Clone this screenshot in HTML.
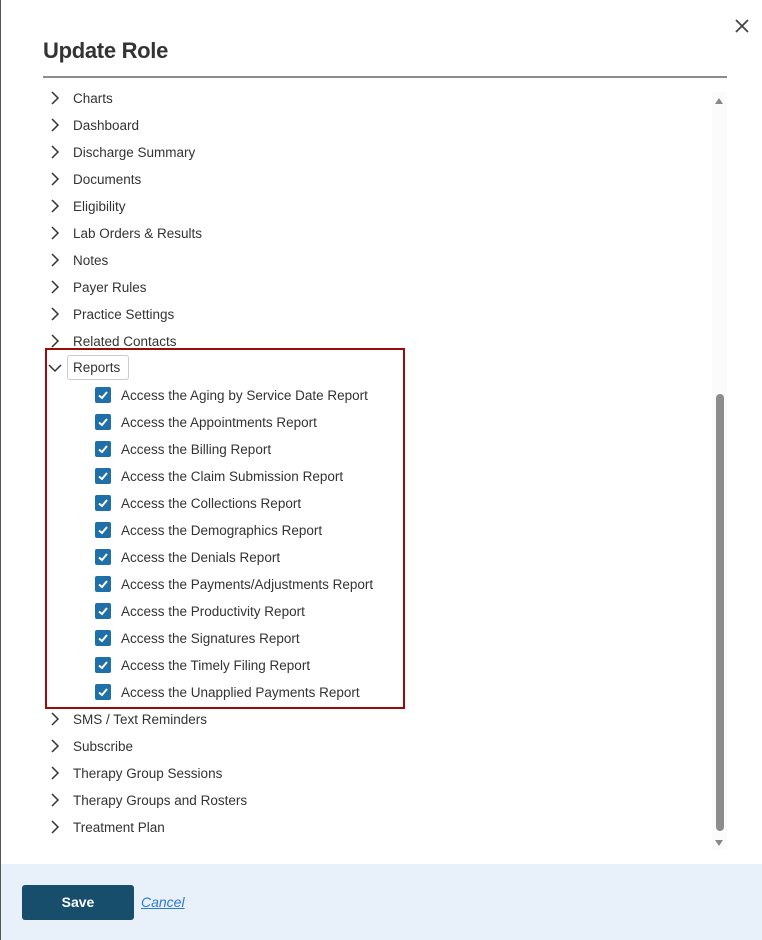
<!DOCTYPE html>
<html><head><style>
*{margin:0;padding:0;box-sizing:border-box}
body{width:762px;height:940px;background:#fff;font-family:"Liberation Sans",sans-serif;position:relative;overflow:hidden;color:#333}
.lb{position:absolute;left:0;top:0;width:1px;height:940px;background:#555}
h1{position:absolute;left:43px;top:38px;font-size:22px;font-weight:bold;color:#333;letter-spacing:-0.3px}
.sep{position:absolute;left:43px;top:76px;width:684px;height:2px;background:#8c8c8c}
.row{position:absolute;left:73px;font-size:13.5px;color:#333;height:27px;line-height:27px;white-space:nowrap}
.chev{position:absolute;left:48px;width:14px;height:14px}
.cb{position:absolute;left:95px;width:16px;height:16px;background:#1f6fa8;border-radius:2px}
.red{position:absolute;left:45px;top:348px;width:360px;height:361px;border:2px solid #9b0b0b}
.rep{position:absolute;left:67px;top:355px;width:62px;height:25px;border:1px solid #ccc;border-radius:3px;font-size:13.5px;line-height:23px;padding-left:5px}
.track{position:absolute;left:712px;top:92px;width:15px;height:758px;background:#fbfbfb}
.thumb{position:absolute;left:716px;top:394px;width:8px;height:437px;background:#8c8c8c;border-radius:4px}
.foot{position:absolute;left:1px;top:864px;width:761px;height:76px;background:#e8f0fa}
.save{position:absolute;left:22px;top:885px;width:112px;height:35px;background:#164e6b;border-radius:3px;color:#fff;font-size:14px;font-weight:bold;text-align:center;line-height:35px}
.cancel{position:absolute;left:141px;top:894px;font-size:14px;font-style:italic;color:#2d7ad0;text-decoration:underline}
</style></head><body>
<div class="lb"></div>
<h1>Update Role</h1>
<svg style="position:absolute;left:735px;top:19px" width="14" height="14"><path d="M1 1L13 13M13 1L1 13" stroke="#444" stroke-width="1.8"/></svg>
<div class="sep"></div>
<div class="track"></div>
<svg style="position:absolute;left:714px;top:97px" width="10" height="8"><path d="M1 7L5 1L9 7Z" fill="#888"/></svg>
<svg style="position:absolute;left:714px;top:839px" width="10" height="8"><path d="M1 1L5 7L9 1Z" fill="#888"/></svg>
<div class="thumb"></div>
<div class="red"></div>
<div id="c"></div>
<div class="foot"></div>
<div class="save">Save</div>
<div class="cancel">Cancel</div>
<script>
var top1=["Charts","Dashboard","Discharge Summary","Documents","Eligibility","Lab Orders & Results","Notes","Payer Rules","Practice Settings","Related Contacts"];
var subs=["Aging by Service Date","Appointments","Billing","Claim Submission","Collections","Demographics","Denials","Payments/Adjustments","Productivity","Signatures","Timely Filing","Unapplied Payments"];
var bot=["SMS / Text Reminders","Subscribe","Therapy Group Sessions","Therapy Groups and Rosters","Treatment Plan"];
var h="";var right='<path d="M4 1L10 7L4 13" fill="none" stroke="#333" stroke-width="1.5"/>';
function chev(cy,p){return '<svg class="chev" style="top:'+(cy-7)+'px" viewBox="0 0 14 14">'+p+'</svg>';}
top1.forEach(function(t,i){var cy=98+27*i;h+=chev(cy,right)+'<div class="row" style="top:'+(cy-13.5)+'px">'+t.replace("&","&amp;")+'</div>';});
h+=chev(368,'<path d="M1 4L7 10L13 4" fill="none" stroke="#333" stroke-width="1.5"/>')+'<div class="rep">Reports</div>';
subs.forEach(function(t,i){var cy=395+27*i;h+='<div class="cb" style="top:'+(cy-8)+'px"><svg width="16" height="16"><path d="M4 8.5L7 11L12 5" fill="none" stroke="#fff" stroke-width="2"/></svg></div><div class="row" style="left:121px;top:'+(cy-13.5)+'px">Access the '+t+' Report</div>';});
bot.forEach(function(t,i){var cy=719+27*i;h+=chev(cy,right)+'<div class="row" style="top:'+(cy-13.5)+'px">'+t+'</div>';});
document.getElementById("c").innerHTML=h;
</script>
</body></html>
